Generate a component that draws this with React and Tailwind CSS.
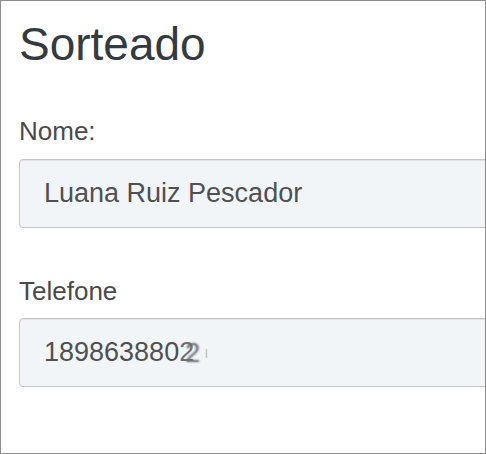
export default function App() {
  return (
    <div className="w-[486px] h-[454px] overflow-hidden border border-[#8c8c8c] bg-white pl-[18px] font-['Liberation_Sans',Arial,sans-serif]">
      <h1 className="mt-[18px] text-[46px] leading-[50px] text-[#333a40] font-normal">Sorteado</h1>

      <div className="mt-[43px]">
        <label className="block text-[26px] leading-[38px] text-[#4a4a4a]">Nome:</label>
        <div className="mt-[9px] w-[640px] h-[69px] flex items-center pl-[24px] rounded-[4px] border border-[#c6c6c6] bg-[#f2f5f8] shadow-[inset_0_1px_1px_rgba(0,0,0,0.075)] text-[27px] text-[#505050]">
          Luana Ruiz Pescador
        </div>
      </div>

      <div className="mt-[44px]">
        <label className="block text-[26px] leading-[38px] text-[#4a4a4a]">Telefone</label>
        <div className="mt-[8px] w-[640px] h-[69px] flex items-center pl-[24px] rounded-[4px] border border-[#c6c6c6] bg-[#f2f5f8] shadow-[inset_0_1px_1px_rgba(0,0,0,0.075)] text-[27px] text-[#505050]">
          <span>189863880</span>
          <span className="text-[#707070] [text-shadow:6px_1px_2px_rgba(40,40,40,0.7)]">2</span>
          <span className="ml-[10px] text-[16px] text-[#c4c4c4] blur-[0.6px]">ı</span>
        </div>
      </div>
    </div>
  );
}
